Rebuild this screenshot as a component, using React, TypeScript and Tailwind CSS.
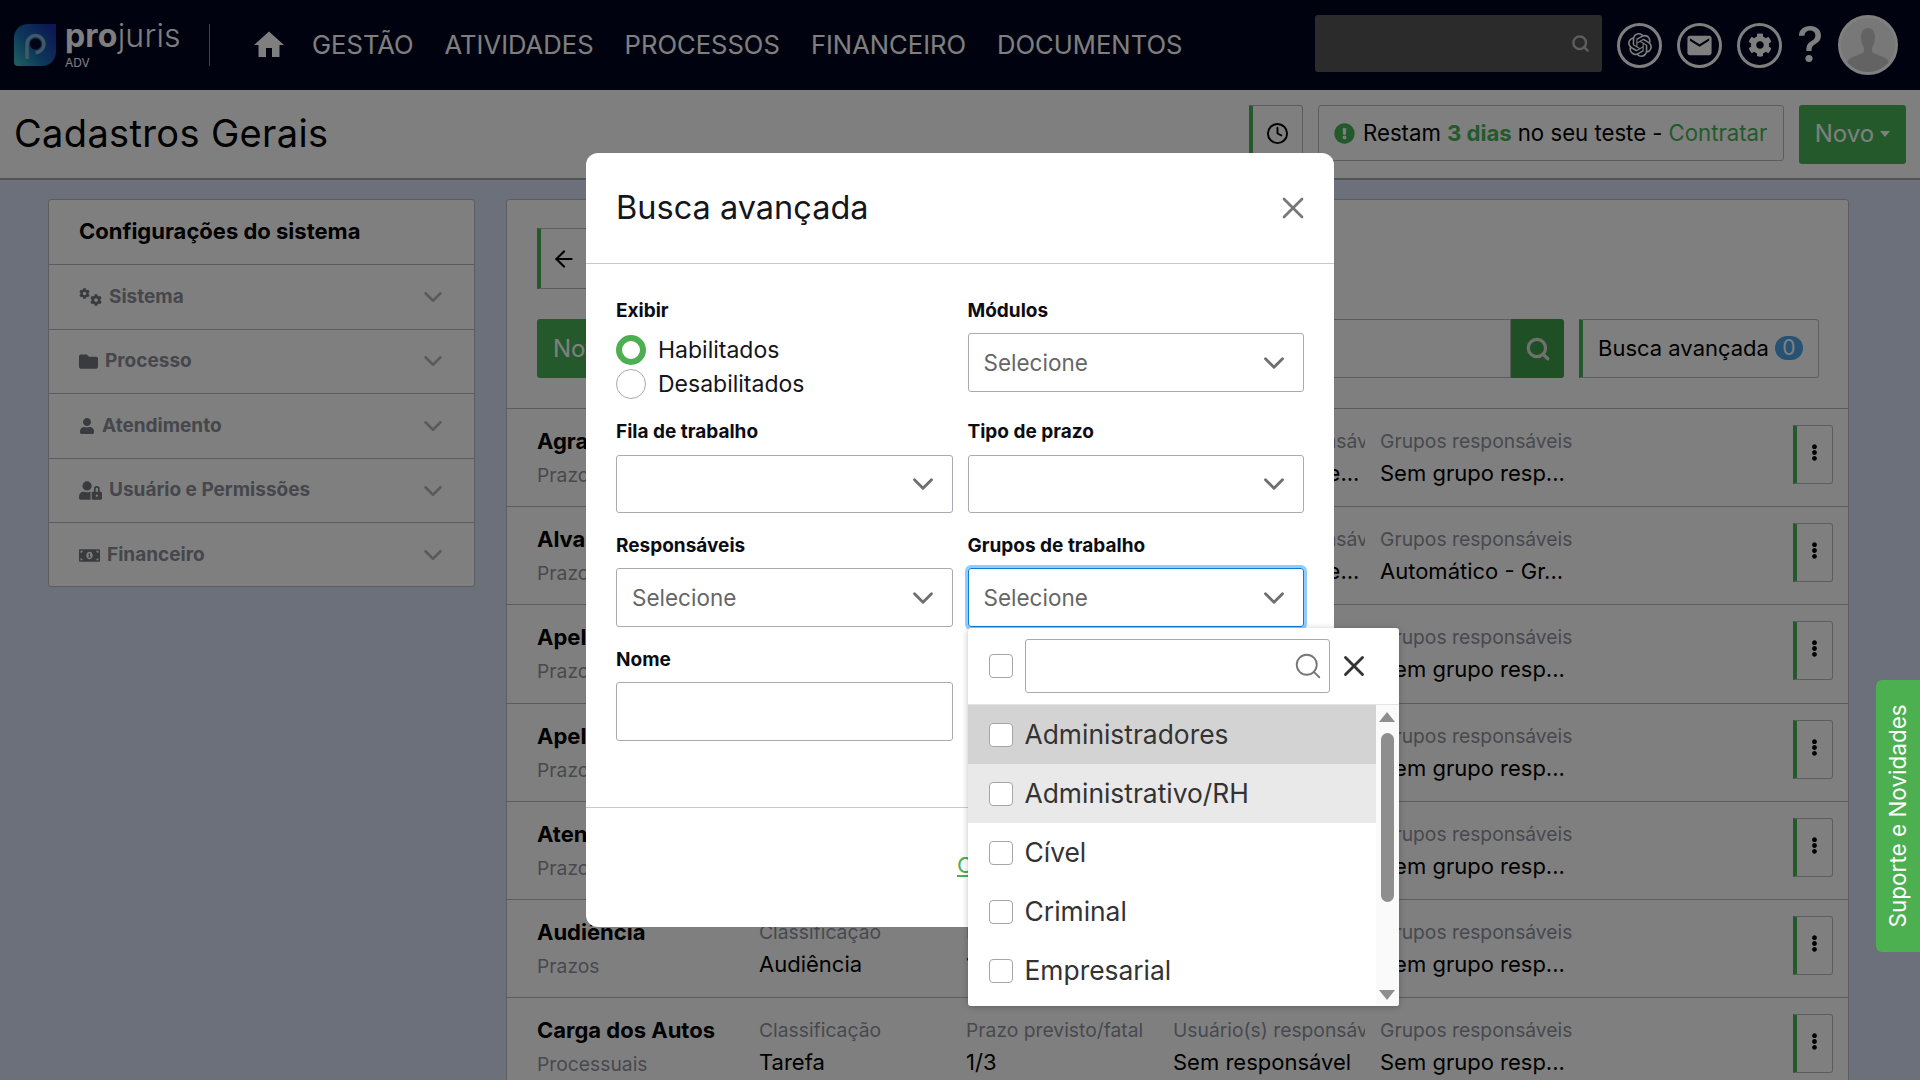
import React from 'react';
import { ArrowLeft, ChevronDown, Clock, Search, X } from 'lucide-react';
import {
  FaCog,
  FaEllipsisV,
  FaExclamationCircle,
  FaFolder,
  FaMoneyBillAlt,
  FaUser,
  FaUserLock,
} from 'react-icons/fa';
import { MdEmail, MdHome } from 'react-icons/md';
import { SiOpenai } from 'react-icons/si';

const navItems = ['GESTÃO', 'ATIVIDADES', 'PROCESSOS', 'FINANCEIRO', 'DOCUMENTOS'];

const sideItems = [
  {
    label: 'Sistema',
    icon: (
      <span className="flex w-[23px] h-[18px]">
        <FaCog className="size-[11px]" />
        <FaCog className="size-[12px] mt-[6px]" />
      </span>
    ),
  },
  { label: 'Processo', icon: <FaFolder className="size-[19px]" /> },
  { label: 'Atendimento', icon: <FaUser className="size-[16px]" /> },
  { label: 'Usuário e Permissões', icon: <FaUserLock className="size-[23px]" /> },
  { label: 'Financeiro', icon: <FaMoneyBillAlt className="size-[21px]" /> },
];

const rows = [
  { title: 'Agravo', sub: 'Prazos', kind: 'Tarefa', term: '1/3', user: 'Automático - Re...', group: 'Sem grupo resp...' },
  { title: 'Alvará', sub: 'Prazos', kind: 'Tarefa', term: '1/3', user: 'Automático - Re...', group: 'Automático - Gr...' },
  { title: 'Apelação', sub: 'Prazos', kind: 'Tarefa', term: '1/3', user: 'Sem responsável', group: 'Sem grupo resp...' },
  { title: 'Apelação', sub: 'Prazos', kind: 'Tarefa', term: '1/3', user: 'Sem responsável', group: 'Sem grupo resp...' },
  { title: 'Atendimento', sub: 'Prazos', kind: 'Tarefa', term: '1/3', user: 'Sem responsável', group: 'Sem grupo resp...' },
  { title: 'Audiência', sub: 'Prazos', kind: 'Audiência', term: '1/3', user: 'Sem responsável', group: 'Sem grupo resp...' },
  { title: 'Carga dos Autos', sub: 'Processuais', kind: 'Tarefa', term: '1/3', user: 'Sem responsável', group: 'Sem grupo resp...' },
];

const groups = ['Administradores', 'Administrativo/RH', 'Cível', 'Criminal', 'Empresarial'];

const Logo = () => (
  <svg viewBox="0 0 42 42" className="w-[42px] h-[42px]">
    <defs>
      <linearGradient id="lg" x1="0" y1="1" x2="1" y2="0.2">
        <stop offset="0" stopColor="#3fc6c0" />
        <stop offset="0.45" stopColor="#1b6fb4" />
        <stop offset="1" stopColor="#1a2fa8" />
      </linearGradient>
    </defs>
    <path d="M14 0H42V28a14 14 0 0 1-14 14H4a4 4 0 0 1-4-4V14A14 14 0 0 1 14 0Z" fill="url(#lg)" />
    <path d="M13 35V20a8.5 8.5 0 1 1 8.5 8.5" fill="none" stroke="#7fb4c8" strokeWidth="3.5" />
    <circle cx="21.5" cy="20" r="5.5" fill="#04082a" />
  </svg>
);

const RoundIcon = ({ children }: { children: React.ReactNode }) => (
  <div className="size-[45px] rounded-full border-[3px] border-white flex items-center justify-center text-white">
    {children}
  </div>
);

const Avatar = () => (
  <div className="size-[60px] rounded-full border-[3px] border-white bg-[#f0f0f0] overflow-hidden">
    <svg viewBox="0 0 54 54" className="size-full">
      <path d="M27 10c-5 0-7 4-7 9 0 5 2 9 3 11v4c-3 3-14 4-17 10v10h42V44c-3-6-14-7-17-10v-4c1-2 3-6 3-11 0-5-2-9-7-9Z" fill="#c6c6c6" />
    </svg>
  </div>
);

const Header = () => (
  <header className="h-[90px] shrink-0 bg-[#02041e] flex items-center">
    <div className="pl-[14px] pb-[1px]">
      <Logo />
    </div>
    <div className="ml-[9px] w-[118px] flex flex-col text-white">
      <span className="text-[32px] leading-[30px] tracking-[0.2px]">
        <span className="font-bold">pro</span>
        <span className="font-light">juris</span>
      </span>
      <span className="mt-[6px] text-[12px] leading-[12px]">ADV</span>
    </div>
    <div className="ml-[26px] h-[42px] w-px bg-[#8a8a8a]" />
    <MdHome className="ml-[41px] size-[36px] text-white" />
    <nav className="ml-[25px] flex gap-[31px] text-[25.6px] text-white">
      {navItems.map((item) => (
        <span key={item}>{item}</span>
      ))}
    </nav>
    <div className="ml-auto w-[287px] h-[57px] rounded-[3px] bg-[#565656] flex items-center justify-end pr-[12px] mb-[3px]">
      <Search className="size-[19px] text-[#bdbdbd]" strokeWidth={3} />
    </div>
    <div className="ml-[15px] flex items-center gap-[15px] pr-[22px]">
      <RoundIcon>
        <SiOpenai className="size-[24px]" />
      </RoundIcon>
      <RoundIcon>
        <MdEmail className="size-[29px]" />
      </RoundIcon>
      <RoundIcon>
        <FaCog className="size-[24px]" />
      </RoundIcon>
      <span className="w-[26px] text-center text-[50px] leading-none font-medium text-white mb-[3px]">?</span>
      <Avatar />
    </div>
  </header>
);

const TitleBar = () => (
  <div className="h-[90px] shrink-0 bg-white border-b-2 border-[#a8a8a8] flex items-start pt-[15px] pl-[14px] pr-[14px]">
    <h1 className="text-[38px] leading-[56px] tracking-[0.35px] text-black">Cadastros Gerais</h1>
    <div className="ml-auto w-[54px] h-[56px] border border-[#bbbbc2] border-l-[4px] border-l-[#48b556] rounded-r-[3px] flex items-center justify-center text-black">
      <Clock className="size-[23px]" strokeWidth={2} />
    </div>
    <div className="ml-[15px] w-[466px] h-[56px] border border-[#bbbbc2] rounded-[3px] flex items-center pl-[15px] text-[22.2px] text-black whitespace-nowrap">
      <FaExclamationCircle className="size-[21px] mr-[8px] text-[#48b556]" />
      <span>Restam</span>
      <span className="font-bold text-[#48b556] mx-[6px]">3 dias</span>
      <span>no seu teste -</span>
      <span className="ml-[6px] text-[#48b556]">Contratar</span>
    </div>
    <div className="ml-[15px] w-[107px] h-[59px] rounded-[3px] bg-[#48b556] flex items-center justify-center pb-[2px] text-white text-[24px]">
      Novo
      <span className="ml-[6px] border-x-[5px] border-x-transparent border-t-[6px] border-t-white" />
    </div>
  </div>
);

const Sidebar = () => (
  <aside className="w-[427px] h-[388px] shrink-0 bg-white border border-[#bbbbc2] rounded-[3px]">
    <div className="h-[64px] flex items-center pl-[30px] pb-[2px] text-[22px] font-bold text-black">
      Configurações do sistema
    </div>
    {sideItems.map((item) => (
      <div
        key={item.label}
        className="h-[64.6px] border-t border-[#bbbbc2] flex items-center pl-[30px] pr-[26px] text-[#8a8e98]"
      >
        <span className="text-[#74777f] mr-[7px]">{item.icon}</span>
        <span className="text-[19px] font-bold">{item.label}</span>
        <ChevronDown className="ml-auto size-[30px] text-[#b4b4b4]" strokeWidth={2} />
      </div>
    ))}
  </aside>
);

const ListRow = ({ row }: { row: (typeof rows)[number] }) => {
  const cols = [
    { label: 'Classificação', value: row.kind },
    { label: 'Prazo previsto/fatal', value: row.term },
    { label: 'Usuário(s) responsáveis', value: row.user },
    { label: 'Grupos responsáveis', value: row.group },
  ];
  return (
    <div className="h-[98.2px] shrink-0 border-t border-[#bbbbc2] flex pl-[30px] pr-[15px]">
      <div className="w-[222px] pt-[17px]">
        <div className="text-[22px] leading-[30px] font-bold text-black">{row.title}</div>
        <div className="mt-[5px] text-[19.3px] leading-[28px] text-[#8f939e]">{row.sub}</div>
      </div>
      {cols.map((col) => (
        <div key={col.label} className="w-[207px] pt-[18px] pr-[15px]">
          <div className="text-[19.3px] leading-[28px] text-[#8f939e] whitespace-nowrap overflow-hidden">{col.label}</div>
          <div className="mt-[3px] text-[22px] leading-[30px] text-black whitespace-nowrap overflow-hidden">{col.value}</div>
        </div>
      ))}
      <div className="ml-auto mt-[16px] w-[40px] h-[59px] border border-[#bbbbc2] border-l-[4px] border-l-[#48b556] rounded-r-[3px] flex items-center justify-center pb-[4px] text-black">
        <FaEllipsisV className="size-[17px]" />
      </div>
    </div>
  );
};

const MainPanel = () => (
  <main className="w-[1343px] shrink-0 bg-white border border-[#bbbbc2] rounded-t-[3px]">
    <div className="h-[208px] pl-[30px] pr-[29px] pt-[28px] flex flex-col">
      <div className="w-[63px] h-[61px] border border-[#bbbbc2] border-l-[4px] border-l-[#48b556] flex items-center pl-[10px] text-black">
        <ArrowLeft className="size-[26px]" />
      </div>
      <div className="mt-[30px] flex">
        <div className="w-[74px] h-[59px] rounded-l-[3px] bg-[#48b556] flex items-center pl-[16px] text-[24px] text-white">
          Novo
        </div>
        <div className="ml-[16px] flex-1 h-[59px] border border-[#bbbbc2]" />
        <div className="w-[53px] h-[59px] rounded-r-[3px] bg-[#3fa04b] flex items-center justify-center text-[#e0e0e0]">
          <Search className="size-[26px]" strokeWidth={3} />
        </div>
        <div className="ml-[15px] w-[240px] h-[59px] border border-[#bbbbc2] border-l-[4px] border-l-[#48b556] rounded-r-[3px] flex items-center pl-[15px] pb-[1px] text-[22px] text-black whitespace-nowrap">
          Busca avançada
          <span className="ml-[6px] w-[28px] h-[24px] rounded-full bg-[#4ea5e8] flex items-center justify-center text-[21px] text-white">
            0
          </span>
        </div>
      </div>
    </div>
    {rows.map((row, i) => (
      <ListRow key={i} row={row} />
    ))}
  </main>
);

const Field = ({ label, children }: { label: string; children: React.ReactNode }) => (
  <div>
    <div className="h-[24px] text-[19px] leading-[24px] font-bold text-[#0c0c14]">{label}</div>
    {children}
  </div>
);

const SelectBox = ({
  value,
  focused,
  box = 'mt-[10px] h-[59px]',
}: {
  value?: string;
  focused?: boolean;
  box?: string;
}) => (
  <div
    className={
      focused
        ? `${box} rounded-[3px] border border-[#1479d4] shadow-[0_0_0_3px_#8fcdff] flex items-center pl-[15px] pr-[12px] text-[22.5px] text-[#666]`
        : `${box} rounded-[3px] border border-[#a9a9b4] flex items-center pl-[15px] pr-[12px] text-[22.5px] text-[#666]`
    }
  >
    <span>{value}</span>
    <ChevronDown className="ml-auto size-[34px] text-[#6f6f6f]" strokeWidth={2} />
  </div>
);

const CheckBox = () => (
  <span className="size-[24px] shrink-0 rounded-[4px] border border-[#a5a5a5] bg-white" />
);

const GroupDropdown = () => (
  <div className="absolute z-10 left-0 top-[calc(100%+1px)] w-[431px] h-[378px] bg-white rounded-[3px] shadow-[0_1px_6px_rgba(0,0,0,0.25)] overflow-hidden">
    <div className="h-[77px] border-b border-[#e4e4e4] flex items-center pl-[21px]">
      <CheckBox />
      <div className="ml-[12px] w-[305px] h-[54px] rounded-[3px] border border-[#a9a9b4] flex items-center justify-end pr-[6px] text-[#777]">
        <Search className="size-[30px]" strokeWidth={1.5} />
      </div>
      <X className="ml-[7px] size-[34px] text-[#333]" strokeWidth={2} />
    </div>
    <div className="flex h-[301px]">
      <div className="w-[408px]">
        {groups.map((g, i) => (
          <div
            key={g}
            className={
              i === 0
                ? 'h-[59px] bg-[#d3d3d3] flex items-center pl-[21px] text-[26.4px] text-[#333]'
                : i === 1
                  ? 'h-[59px] bg-[#e9e9e9] flex items-center pl-[21px] text-[26.4px] text-[#333]'
                  : 'h-[59px] flex items-center pl-[21px] text-[26.4px] text-[#333]'
            }
          >
            <CheckBox />
            <span className="ml-[12px]">{g}</span>
          </div>
        ))}
      </div>
      <div className="w-[23px] bg-[#fafafa] flex flex-col items-center pt-[7px]">
        <span className="border-x-[8px] border-x-transparent border-b-[10px] border-b-[#8e8e8e]" />
        <span className="mt-[11px] w-[13px] h-[169px] rounded-full bg-[#8e8e8e]" />
        <span className="mt-auto mb-[6px] border-x-[8px] border-x-transparent border-t-[10px] border-t-[#8e8e8e]" />
      </div>
    </div>
  </div>
);

const Modal = () => (
  <div className="w-[748px] h-[774px] bg-white rounded-[12px] flex flex-col">
    <div className="h-[111px] shrink-0 border-b border-[#c9c9c9] flex items-center pl-[30px] pr-[23px]">
      <h2 className="text-[32.5px] text-[#15151c]">Busca avançada</h2>
      <X className="ml-auto size-[36px] text-[#777]" strokeWidth={1.8} />
    </div>
    <div className="h-[543px] shrink-0 pl-[30px] pr-[30px] pt-[35px]">
      <div className="grid grid-cols-2 gap-x-[15px]">
        <Field label="Exibir">
          <div className="mt-[2px] h-[67px] flex flex-col">
            <div className="shrink-0 flex items-center h-[34px] mt-[8px]">
              <span className="size-[30px] rounded-full border-[6px] border-[#4caf50]" />
              <span className="ml-[12px] text-[23px] text-[#15151c]">Habilitados</span>
            </div>
            <div className="shrink-0 flex items-center h-[34px]">
              <span className="size-[30px] rounded-full border border-[#a9a9a9]" />
              <span className="ml-[12px] text-[23px] text-[#15151c]">Desabilitados</span>
            </div>
          </div>
        </Field>
        <Field label="Módulos">
          <SelectBox value="Selecione" />
        </Field>
      </div>
      <div className="mt-[28px] grid grid-cols-2 gap-x-[15px]">
        <Field label="Fila de trabalho">
          <SelectBox box="mt-[11px] h-[58px]" />
        </Field>
        <Field label="Tipo de prazo">
          <SelectBox box="mt-[11px] h-[58px]" />
        </Field>
      </div>
      <div className="mt-[21px] grid grid-cols-2 gap-x-[15px]">
        <Field label="Responsáveis">
          <SelectBox value="Selecione" />
        </Field>
        <div className="relative">
          <Field label="Grupos de trabalho">
            <SelectBox value="Selecione" focused />
          </Field>
          <GroupDropdown />
        </div>
      </div>
      <div className="mt-[21px] w-[337px]">
        <Field label="Nome">
          <div className="mt-[10px] h-[59px] rounded-[3px] border border-[#a9a9b4]" />
        </Field>
      </div>
    </div>
    <div className="flex-1 border-t border-[#c9c9c9] flex items-center pb-[4px] pl-[371px]">
      <span className="text-[22px] text-[#4caf50] underline">Cancelar</span>
    </div>
  </div>
);

export default function App() {
  return (
    <div className="relative w-[1920px] h-[1080px] overflow-hidden bg-[#d8e0f4] flex flex-col font-['Inter',sans-serif]">
      <Header />
      <TitleBar />
      <div className="flex-1 min-h-0 flex items-start gap-[31px] pl-[48px] pt-[19px]">
        <Sidebar />
        <MainPanel />
      </div>

      {/* backdrop and open dialog */}
      <div className="absolute inset-0 z-40 bg-black/50 pl-[586px] pt-[153px]">
        <Modal />
      </div>

      <div className="absolute z-50 right-0 top-[680px] w-[44px] h-[272px] rounded-l-[6px] bg-[#4caf50] flex items-center justify-center">
        <span className="-rotate-90 whitespace-nowrap text-[22.5px] text-white">Suporte e Novidades</span>
      </div>
    </div>
  );
}
